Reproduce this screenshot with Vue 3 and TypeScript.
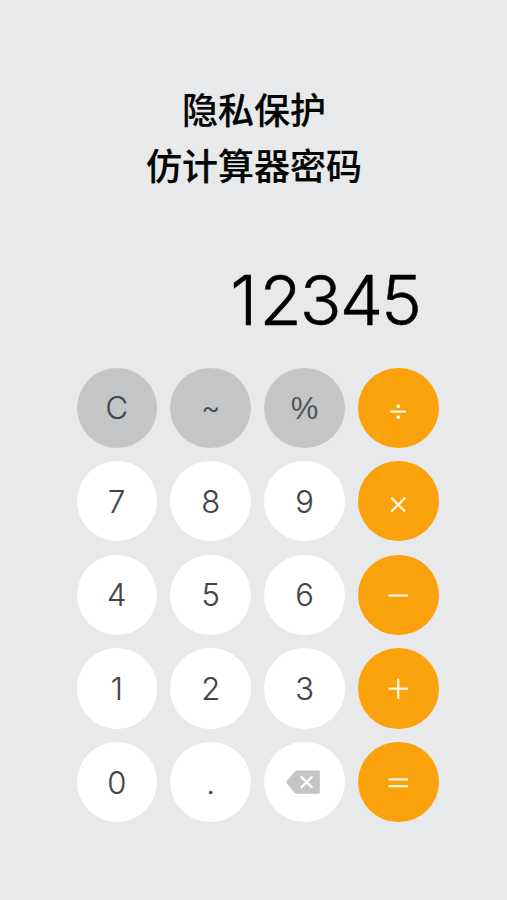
<script setup lang="ts">
import { ref } from 'vue'

type Tone = 'muted' | 'digit' | 'operator'
interface Key {
  id: string
  tone: Tone
  label?: string
  path?: string
  dots?: number[]
}

const display = ref('12345')

const keys: Key[] = [
  { id: 'clear', tone: 'muted', label: 'C' },
  { id: 'sign', tone: 'muted', label: '~' },
  { id: 'percent', tone: 'muted', label: '%' },
  { id: 'divide', tone: 'operator', path: 'M32.3 43.4H47.7', dots: [37.9, 48.8] },
  { id: '7', tone: 'digit', label: '7' },
  { id: '8', tone: 'digit', label: '8' },
  { id: '9', tone: 'digit', label: '9' },
  { id: 'multiply', tone: 'operator', path: 'M33 36.4L47 50.4M47 36.4L33 50.4' },
  { id: '4', tone: 'digit', label: '4' },
  { id: '5', tone: 'digit', label: '5' },
  { id: '6', tone: 'digit', label: '6' },
  { id: 'minus', tone: 'operator', path: 'M30.3 40.3H49.7' },
  { id: '1', tone: 'digit', label: '1' },
  { id: '2', tone: 'digit', label: '2' },
  { id: '3', tone: 'digit', label: '3' },
  { id: 'plus', tone: 'operator', path: 'M30.3 40.5H49.7M40 30.6V50.4' },
  { id: '0', tone: 'digit', label: '0' },
  { id: 'point', tone: 'digit', label: '.' },
  { id: 'delete', tone: 'digit' },
  { id: 'equals', tone: 'operator', path: 'M30.3 37.2H49.7M30.3 43.9H49.7' },
]

function press(key: Key) {
  if (key.id === 'clear') display.value = '0'
  else if (key.id === 'delete') display.value = display.value.slice(0, -1) || '0'
  else if (key.tone === 'digit' && key.label) {
    display.value = display.value === '0' && key.label !== '.' ? key.label : display.value + key.label
  }
}
</script>

<template>
  <main class="screen">
    <h1 class="title">隐私保护<br />仿计算器密码</h1>
    <output class="display"><span v-for="(char, i) in display" :key="i" :class="{ one: char === '1' }">{{ char }}</span></output>
    <section class="keypad">
      <button
        v-for="key in keys"
        :key="key.id"
        type="button"
        class="key"
        :class="key.tone"
        @click="press(key)"
      >
        <span v-if="key.label" :class="`label-${key.id}`">{{ key.label }}</span>
        <svg v-else-if="key.id === 'delete'" viewBox="0 0 80 80" class="icon">
          <path class="tag" d="M33 28.4H54.2Q55.6 28.4 55.6 29.8V50.2Q55.6 51.6 54.2 51.6H33Q31.6 51.6 30.5 50.5L22.8 41.2Q22 40 22.8 38.8L30.5 29.5Q31.6 28.4 33 28.4Z" />
          <path class="cross" d="M37.4 34.9L47.4 44.9M47.4 34.9L37.4 44.9" />
        </svg>
        <svg v-else viewBox="0 0 80 80" class="icon">
          <path class="stroke" :d="key.path" />
          <circle v-for="y in key.dots" :key="y" class="dot" cx="40" :cy="y" r="1.9" />
        </svg>
      </button>
    </section>
  </main>
</template>

<style>
body {
  margin: 0;
  background: #e8e9ea;
}
</style>

<style scoped>
.screen {
  box-sizing: border-box;
  width: 507px;
  height: 900px;
  padding-top: 80px;
  overflow: hidden;
  background: #e8e9ea;
  font-family: Inter, "Noto Sans CJK SC", sans-serif;
}
.title {
  margin: 0;
  padding-left: 1px;
  text-align: center;
  font-family: "Noto Sans CJK SC", sans-serif;
  font-size: 36px;
  line-height: 56px;
  font-weight: 500;
  color: #050505;
  -webkit-text-stroke: 0.2px #050505;
}
.display {
  display: flex;
  justify-content: flex-end;
  height: 84px;
  margin-top: 66px;
  padding-right: 87px;
  font-size: 69px;
  line-height: 84px;
  font-weight: 300;
  letter-spacing: -2px;
  color: #000;
  -webkit-text-stroke: 0.5px #000;
}
.one {
  margin-right: 4px;
}
.keypad {
  display: grid;
  grid-template-columns: repeat(4, 80.4px);
  grid-auto-rows: 80.4px;
  gap: 13.2px 13.5px;
  margin: 25.5px 0 0 76.6px;
}
.key {
  display: flex;
  align-items: center;
  justify-content: center;
  padding: 0;
  border: 0;
  border-radius: 50%;
  font-family: Inter, sans-serif;
  font-size: 31px;
  line-height: 40px;
  font-weight: 300;
  color: #444;
  -webkit-text-stroke: 0.15px #444;
}
.key span {
  padding-top: 1px;
}
.digit {
  background: #fff;
}
.muted {
  background: #c3c5c7;
}
.operator {
  background: #faa20b;
}
.key .label-sign {
  font-size: 29px;
  padding-top: 0;
}
.key .label-percent {
  padding-top: 3px;
  font-family: "Liberation Sans", Arial, sans-serif;
  color: #555;
  -webkit-text-stroke: 0;
}
.icon {
  display: block;
  width: 80.4px;
  height: 80.4px;
}
.stroke {
  fill: none;
  stroke: #fff5df;
  stroke-width: 2.3;
}
.dot {
  fill: #fff5df;
}
.tag {
  fill: #c3c5c6;
}
.cross {
  fill: none;
  stroke: #fff;
  stroke-width: 2.3;
  stroke-linecap: round;
}
</style>
